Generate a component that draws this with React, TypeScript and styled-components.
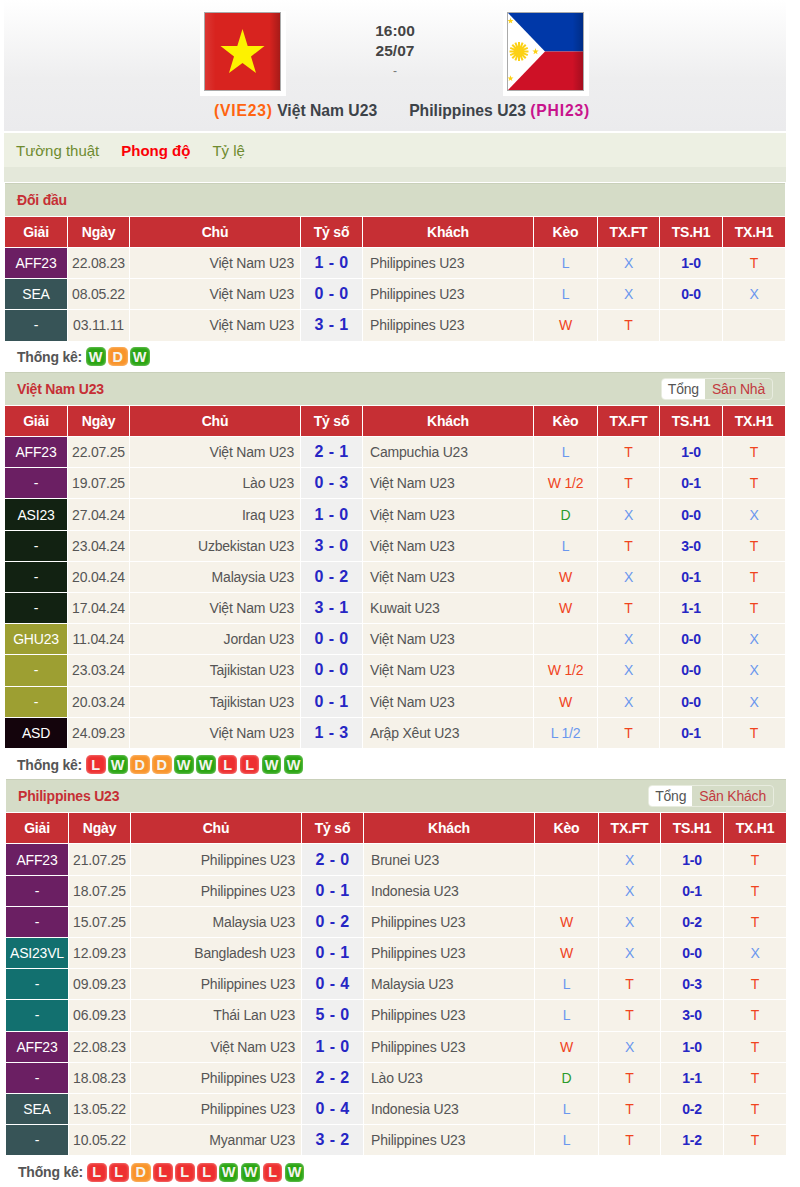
import React, { type FC } from 'react'
import styled, { createGlobalStyle } from 'styled-components'

const GlobalStyle = createGlobalStyle`
  body {
    margin: 0;
    background: #fff;
    font-family: "Liberation Sans", Arial, sans-serif;
  }
`

const Page = styled.div`
  width: 800px;
  height: 1187px;
  overflow: hidden;
  box-sizing: border-box;
  padding: 0 14px 0 4px;
`

const Header = styled.div`
  height: 131px;
  box-sizing: border-box;
  padding-top: 11px;
  background: linear-gradient(#ffffff, #eeeeef 60%, #ebebed);
  display: grid;
  grid-template-columns: 340px 1fr 340px;
  grid-template-rows: 87px 1fr;
`

const FlagCell = styled.div<{ $side: 'left' | 'right' }>`
  display: flex;
  justify-content: ${p => (p.$side === 'left' ? 'flex-end' : 'flex-start')};
  padding: ${p => (p.$side === 'left' ? '0 58px 0 0' : '0 0 0 57px')};
`

const FlagFrame = styled.div`
  width: 77px;
  height: 79px;
  padding: 1px 5px 5px 4px;
  background: #fff;
`

const FlagSvg = styled.svg`
  display: block;
  width: 77px;
  height: 79px;
`

const MatchInfo = styled.div`
  display: flex;
  flex-direction: column;
  align-items: center;
  padding-top: 10px;
  color: #444;
  font-size: 15.5px;
  font-weight: 700;
  line-height: 20px;
`

const MatchDash = styled.span`
  font-size: 12px;
  font-weight: 400;
  color: #777;
  line-height: 21px;
`

const TeamRow = styled.div`
  grid-row: 2;
  grid-column: 1 / -1;
  display: flex;
  gap: 32px;
  padding: 4px 0 0 210px;
  font-size: 15.7px;
  font-weight: 700;
  color: #3d4349;
  white-space: nowrap;
`

const TeamCode = styled.span<{ $color: string }>`
  color: ${p => p.$color};
  letter-spacing: 0.8px;
`

const Tabs = styled.div`
  margin-top: 2px;
  height: 34px;
  box-sizing: border-box;
  padding: 1px 0 0 12px;
  background: #edf0e3;
  display: flex;
  align-items: center;
  gap: 22px;
  font-size: 15px;
`

const Tab = styled.span<{ $active?: boolean }>`
  color: ${p => (p.$active ? '#fb0007' : '#6f8b2f')};
  font-weight: ${p => (p.$active ? 700 : 400)};
`

const TabStrip = styled.div`
  height: 15px;
  margin-bottom: 1px;
  background: #e4e8da;
`

const Section = styled.div<{ $shift?: boolean }>`
  width: 780px;
  margin-left: ${p => (p.$shift ? '2px' : '1px')};
`

const SectionHead = styled.div`
  height: 33px;
  box-sizing: border-box;
  border-top: 1px solid #c9d0ba;
  background: #d5dcc7;
  display: flex;
  align-items: center;
  justify-content: space-between;
  padding: 0 12px;
`

const SectionTitle = styled.span`
  color: #c62f35;
  font-size: 14px;
  letter-spacing: -0.2px;
  font-weight: 700;
`

const Toggle = styled.div`
  display: flex;
  height: 20px;
  border: 1px solid #e8ecdf;
  border-radius: 4px;
  overflow: hidden;
  font-size: 14px;
  letter-spacing: -0.2px;
  line-height: 20px;
`

const ToggleItem = styled.span<{ $on?: boolean }>`
  padding: 0 ${p => (p.$on ? '6px' : '7px')};
  background: ${p => (p.$on ? '#fff' : 'transparent')};
  color: ${p => (p.$on ? '#555' : '#c23a3f')};
`

const Grid = styled.div`
  display: grid;
  grid-template-columns: 62px 61px 170px 61px 170px 63px 61px 62px 62px;
  column-gap: 1px;
  row-gap: 1px;
  margin-top: 1px;
  background: #fff;
`

const HeadCell = styled.div`
  height: 30px;
  background: #c62f34;
  color: #fff;
  font-size: 14px;
  letter-spacing: -0.2px;
  font-weight: 700;
  display: flex;
  align-items: center;
  justify-content: center;
`

const Cell = styled.div<{
  $align?: 'left' | 'right'
  $color?: string
  $bold?: boolean
}>`
  height: 30.2px;
  background: #f6f2e9;
  color: ${p => p.$color || '#555'};
  font-size: 14px;
  letter-spacing: -0.2px;
  font-weight: ${p => (p.$bold ? 700 : 400)};
  display: flex;
  align-items: center;
  justify-content: ${p =>
    p.$align === 'left' ? 'flex-start' : p.$align === 'right' ? 'flex-end' : 'center'};
  padding: 0 ${p => (p.$align === 'right' ? '6px' : '0')} 0 ${p => (p.$align === 'left' ? '7px' : '0')};
  white-space: nowrap;
`

const LeagueCell = styled(Cell)<{ $bg: string }>`
  background: ${p => p.$bg};
  color: #fff;
`

const ScoreCell = styled(Cell)`
  background: #f0f0f0;
  color: #2626c4;
  font-size: 16px;
  font-weight: 700;
  letter-spacing: 0.4px;
`

const Stats = styled.div<{ $first?: boolean }>`
  height: 31.5px;
  box-sizing: border-box;
  padding: ${p => (p.$first ? '1px' : '2px')} 0 0 12px;
  display: flex;
  align-items: center;
  gap: 2.2px;
  color: #555;
  font-size: 14px;
  letter-spacing: -0.2px;
  font-weight: 700;
`

const StatsLabel = styled.span`
  margin-right: 1.5px;
`

const badgeColors: Record<string, string> = { W: '#2aa512', D: '#f9942a', L: '#ee3030' }

const Badge = styled.span<{ $r: string }>`
  width: 19.8px;
  height: 19px;
  border-radius: 5px;
  background: ${p => badgeColors[p.$r]};
  box-shadow: inset 0 0 3px rgba(255, 255, 255, 0.55);
  color: #f4f4ee;
  font-size: 14.5px;
  letter-spacing: 0;
  font-weight: 700;
  display: flex;
  align-items: center;
  justify-content: center;
`

const RED = '#f0441e'
const BLUE = '#6a97ee'
const GREEN = '#2a9a2a'

const Bet: FC<{ v: string }> = ({ v }) => {
  const c = v.startsWith('W') || v === 'T' ? RED : v === 'D' ? GREEN : BLUE
  return <Cell $color={c}>{v}</Cell>
}

const starPoints = (cx: number, cy: number, r: number) =>
  Array.from({ length: 10 }, (_, i) => {
    const a = -Math.PI / 2 + (i * Math.PI) / 5
    const d = i % 2 ? r * 0.4 : r
    return `${(cx + d * Math.cos(a)).toFixed(1)},${(cy + d * Math.sin(a)).toFixed(1)}`
  }).join(' ')

const VieFlag: FC = () => (
  <FlagSvg viewBox="0 0 77 79">
    <defs>
      <linearGradient id="vieShade" x1="0" x2="1" y1="0" y2="0">
        <stop offset="0" stopColor="#fff" stopOpacity="0.1" />
        <stop offset="0.15" stopColor="#fff" stopOpacity="0" />
        <stop offset="0.85" stopColor="#000" stopOpacity="0" />
        <stop offset="1" stopColor="#000" stopOpacity="0.25" />
      </linearGradient>
    </defs>
    <rect width="77" height="79" fill="#d8231f" />
    <polygon
      points="38.5,17 43.7,34 60.5,34 47,44.5 52,61 38.5,51 25,61 30,44.5 16.5,34 33.3,34"
      fill="#fdf200"
    />
    <rect width="77" height="79" fill="url(#vieShade)" />
    <rect x="0.5" y="0.5" width="76" height="78" fill="none" stroke="#aaa" />
  </FlagSvg>
)

const PhiFlag: FC = () => (
  <FlagSvg viewBox="0 0 77 79">
    <defs>
      <linearGradient id="phiShade" x1="0" x2="1" y1="0" y2="0">
        <stop offset="0.85" stopColor="#000" stopOpacity="0" />
        <stop offset="1" stopColor="#000" stopOpacity="0.22" />
      </linearGradient>
    </defs>
    <rect width="77" height="39.5" fill="#0038a8" />
    <rect y="39.5" width="77" height="39.5" fill="#ce1126" />
    <polygon points="0,0 38,39.5 0,79" fill="#fff" />
    <rect width="77" height="79" fill="url(#phiShade)" />
    <rect x="0.5" y="0.5" width="76" height="78" fill="none" stroke="#aaa" />
    <circle cx="12" cy="39.5" r="5.5" fill="#fcd116" />
    {[0, 22.5, 45, 67.5, 90, 112.5, 135, 157.5].map(a => (
      <line
        key={a}
        x1="2.5"
        y1="39.5"
        x2="21.5"
        y2="39.5"
        stroke="#fcd116"
        strokeWidth="2"
        transform={`rotate(${a} 12 39.5)`}
      />
    ))}
    <polygon points={starPoints(3.5, 9, 3.2)} fill="#fcd116" />
    <polygon points={starPoints(3.5, 66.5, 3.2)} fill="#fcd116" />
    <polygon points={starPoints(28.5, 39.5, 3.4)} fill="#fcd116" />
  </FlagSvg>
)

type Row = [string, string, string, string, string, string, string, string, string, string]

const LEAGUE: Record<string, string> = {
  aff: '#6b1f63',
  sea: '#375457',
  asi: '#122212',
  ghu: '#9d9f32',
  asd: '#14040c',
  vl: '#12706f',
}

const COLUMNS = ['Giải', 'Ngày', 'Chủ', 'Tỷ số', 'Khách', 'Kèo', 'TX.FT', 'TS.H1', 'TX.H1']

const h2h: Row[] = [
  ['aff', 'AFF23', '22.08.23', 'Việt Nam U23', '1 - 0', 'Philippines U23', 'L', 'X', '1-0', 'T'],
  ['sea', 'SEA', '08.05.22', 'Việt Nam U23', '0 - 0', 'Philippines U23', 'L', 'X', '0-0', 'X'],
  ['sea', '-', '03.11.11', 'Việt Nam U23', '3 - 1', 'Philippines U23', 'W', 'T', '', ''],
]

const vie: Row[] = [
  ['aff', 'AFF23', '22.07.25', 'Việt Nam U23', '2 - 1', 'Campuchia U23', 'L', 'T', '1-0', 'T'],
  ['aff', '-', '19.07.25', 'Lào U23', '0 - 3', 'Việt Nam U23', 'W 1/2', 'T', '0-1', 'T'],
  ['asi', 'ASI23', '27.04.24', 'Iraq U23', '1 - 0', 'Việt Nam U23', 'D', 'X', '0-0', 'X'],
  ['asi', '-', '23.04.24', 'Uzbekistan U23', '3 - 0', 'Việt Nam U23', 'L', 'T', '3-0', 'T'],
  ['asi', '-', '20.04.24', 'Malaysia U23', '0 - 2', 'Việt Nam U23', 'W', 'X', '0-1', 'T'],
  ['asi', '-', '17.04.24', 'Việt Nam U23', '3 - 1', 'Kuwait U23', 'W', 'T', '1-1', 'T'],
  ['ghu', 'GHU23', '11.04.24', 'Jordan U23', '0 - 0', 'Việt Nam U23', '', 'X', '0-0', 'X'],
  ['ghu', '-', '23.03.24', 'Tajikistan U23', '0 - 0', 'Việt Nam U23', 'W 1/2', 'X', '0-0', 'X'],
  ['ghu', '-', '20.03.24', 'Tajikistan U23', '0 - 1', 'Việt Nam U23', 'W', 'X', '0-0', 'X'],
  ['asd', 'ASD', '24.09.23', 'Việt Nam U23', '1 - 3', 'Arập Xêut U23', 'L 1/2', 'T', '0-1', 'T'],
]

const phi: Row[] = [
  ['aff', 'AFF23', '21.07.25', 'Philippines U23', '2 - 0', 'Brunei U23', '', 'X', '1-0', 'T'],
  ['aff', '-', '18.07.25', 'Philippines U23', '0 - 1', 'Indonesia U23', '', 'X', '0-1', 'T'],
  ['aff', '-', '15.07.25', 'Malaysia U23', '0 - 2', 'Philippines U23', 'W', 'X', '0-2', 'T'],
  ['vl', 'ASI23VL', '12.09.23', 'Bangladesh U23', '0 - 1', 'Philippines U23', 'W', 'X', '0-0', 'X'],
  ['vl', '-', '09.09.23', 'Philippines U23', '0 - 4', 'Malaysia U23', 'L', 'T', '0-3', 'T'],
  ['vl', '-', '06.09.23', 'Thái Lan U23', '5 - 0', 'Philippines U23', 'L', 'T', '3-0', 'T'],
  ['aff', 'AFF23', '22.08.23', 'Việt Nam U23', '1 - 0', 'Philippines U23', 'W', 'X', '1-0', 'T'],
  ['aff', '-', '18.08.23', 'Philippines U23', '2 - 2', 'Lào U23', 'D', 'T', '1-1', 'T'],
  ['sea', 'SEA', '13.05.22', 'Philippines U23', '0 - 4', 'Indonesia U23', 'L', 'T', '0-2', 'T'],
  ['sea', '-', '10.05.22', 'Myanmar U23', '3 - 2', 'Philippines U23', 'L', 'T', '1-2', 'T'],
]

const MatchTable: FC<{ rows: Row[] }> = ({ rows }) => (
  <Grid>
    {COLUMNS.map(c => (
      <HeadCell key={c}>{c}</HeadCell>
    ))}
    {rows.map((r, i) => (
      <React.Fragment key={i}>
        <LeagueCell $bg={LEAGUE[r[0]]}>{r[1]}</LeagueCell>
        <Cell>{r[2]}</Cell>
        <Cell $align="right">{r[3]}</Cell>
        <ScoreCell>{r[4]}</ScoreCell>
        <Cell $align="left">{r[5]}</Cell>
        <Bet v={r[6]} />
        <Bet v={r[7]} />
        <Cell $bold $color="#2626c4">{r[8]}</Cell>
        <Bet v={r[9]} />
      </React.Fragment>
    ))}
  </Grid>
)

const StatsRow: FC<{ form: string; first?: boolean }> = ({ form, first }) => (
  <Stats $first={first}>
    <StatsLabel>Thống kê:</StatsLabel>
    {form.split('').map((f, i) => (
      <Badge key={i} $r={f}>{f}</Badge>
    ))}
  </Stats>
)

const App: FC = () => (
  <Page>
    <GlobalStyle />
    <Header>
      <FlagCell $side="left">
        <FlagFrame>
          <VieFlag />
        </FlagFrame>
      </FlagCell>
      <MatchInfo>
        <span>16:00</span>
        <span>25/07</span>
        <MatchDash>-</MatchDash>
      </MatchInfo>
      <FlagCell $side="right">
        <FlagFrame>
          <PhiFlag />
        </FlagFrame>
      </FlagCell>
      <TeamRow>
        <span>
          <TeamCode $color="#ff6410">(VIE23)</TeamCode> Việt Nam U23
        </span>
        <span>
          Philippines U23 <TeamCode $color="#c8148c">(PHI23)</TeamCode>
        </span>
      </TeamRow>
    </Header>
    <Tabs>
      <Tab>Tường thuật</Tab>
      <Tab $active>Phong độ</Tab>
      <Tab>Tỷ lệ</Tab>
    </Tabs>
    <TabStrip />
    <Section>
      <SectionHead>
        <SectionTitle>Đối đầu</SectionTitle>
      </SectionHead>
      <MatchTable rows={h2h} />
      <StatsRow form="WDW" first />
    </Section>
    <Section>
      <SectionHead>
        <SectionTitle>Việt Nam U23</SectionTitle>
        <Toggle>
          <ToggleItem $on>Tổng</ToggleItem>
          <ToggleItem>Sân Nhà</ToggleItem>
        </Toggle>
      </SectionHead>
      <MatchTable rows={vie} />
      <StatsRow form="LWDDWWLLWW" />
    </Section>
    <Section $shift>
      <SectionHead>
        <SectionTitle>Philippines U23</SectionTitle>
        <Toggle>
          <ToggleItem $on>Tổng</ToggleItem>
          <ToggleItem>Sân Khách</ToggleItem>
        </Toggle>
      </SectionHead>
      <MatchTable rows={phi} />
      <StatsRow form="LLDLLLWWLW" />
    </Section>
  </Page>
)

export default App
